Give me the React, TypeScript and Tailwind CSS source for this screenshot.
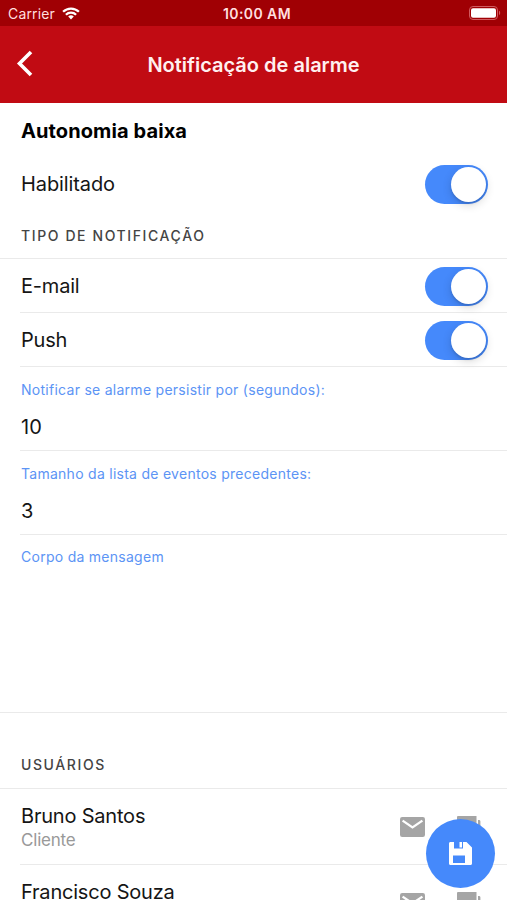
import { useState } from 'react';

interface User {
  name: string;
  role: string;
}

const users: User[] = [
  { name: 'Bruno Santos', role: 'Cliente' },
  { name: 'Francisco Souza', role: 'Cliente' },
];

function StatusBar() {
  return (
    <div className="relative flex h-[26px] shrink-0 items-center justify-between bg-[#a00004] pl-2 pr-[6px] text-[#ffdfdf]">
      <div className="flex items-center gap-[7px] pt-px">
        <span className="text-[14px] leading-none tracking-[0.15px]">Carrier</span>
        <svg width="18" height="13" viewBox="0 0 18 13" fill="none" stroke="#fff" strokeWidth="2.3">
          <path d="M1.1 4.8a11.3 11.3 0 0 1 15.8 0" />
          <path d="M3.9 7.7a7.3 7.3 0 0 1 10.2 0" />
          <path d="M9 12.4 6.2 9.5a4 4 0 0 1 5.6 0z" fill="#fff" stroke="none" />
        </svg>
      </div>
      <span className="absolute left-[257px] top-[7px] -translate-x-1/2 whitespace-nowrap text-[14px] font-semibold leading-[14px] tracking-[0.4px]">
        10:00 AM
      </span>
      <svg width="32" height="14" viewBox="0 0 32 14">
        <rect x="0.5" y="0.5" width="28" height="13" rx="3.5" fill="none" stroke="#d05a5f" />
        <rect x="2" y="2.2" width="25" height="9.6" rx="2" fill="#fff" />
        <path d="M30 4.8v4.4c1.6-.6 1.6-3.8 0-4.4z" fill="#d05a5f" />
      </svg>
    </div>
  );
}

function Toggle({ label }: { label: string }) {
  const [on, setOn] = useState(true);

  return (
    <button
      type="button"
      role="switch"
      aria-checked={on}
      aria-label={label}
      onClick={() => setOn(!on)}
      className={`flex h-[39px] w-[63px] items-center rounded-full px-[2px] ${on ? 'justify-end bg-[#4589fb]' : 'justify-start bg-gray-200'}`}
    >
      <span className="size-[35px] rounded-full bg-white shadow-[0_3px_10px_rgba(0,0,0,0.16),0_2px_2px_rgba(0,0,0,0.1)]" />
    </button>
  );
}

function ToggleRow({ label }: { label: string }) {
  return (
    <div className="ml-5 flex h-[54px] items-center justify-between border-b border-[#eaeaea] pl-px pr-[19px] pt-px">
      <span className="text-[20px] tracking-[-0.2px]">{label}</span>
      <Toggle label={label} />
    </div>
  );
}

function Field({ label, value }: { label: string; value: string }) {
  return (
    <div className="ml-5 h-[84px] border-b border-[#eaeaea] pl-px pt-[13px]">
      <label className="block text-[14px] leading-5 tracking-[0.27px] text-[#5c94f5]">{label}</label>
      <div className="pt-[14px] text-[20px] leading-[27px]">{value}</div>
    </div>
  );
}

function MailIcon() {
  return (
    <svg width="25" height="20" viewBox="0 0 25 20">
      <rect width="25" height="20" rx="2.2" fill="#a5a5a5" />
      <path d="M2.6 3.6 12.5 10.4 22.4 3.6" fill="none" stroke="#fff" strokeWidth="2.3" />
    </svg>
  );
}

function ChatIcon() {
  return (
    <svg width="25" height="24" viewBox="0 0 25 24" fill="#a5a5a5">
      <path d="M1.2 0H19.5v14H5L0 19V1.2C0 .5.5 0 1.2 0z" />
      <path d="M21 4h1c.8 0 1.400.6 1.400 1.400V24l-5-5H5v-3h16z" />
    </svg>
  );
}

function UserRow({ user }: { user: User }) {
  return (
    <div className="ml-5 flex h-[76px] shrink-0 items-center justify-between border-b border-[#eaeaea] pl-px pr-[25px]">
      <div className="pt-px">
        <div className="text-[20px] leading-[26px] tracking-[-0.2px]">{user.name}</div>
        <div className="text-[17px] leading-[22px] tracking-[-0.2px] text-[#999]">{user.role}</div>
      </div>
      <div className="flex items-start gap-8 pt-[3px]">
        <div className="pt-px">
          <MailIcon />
        </div>
        <ChatIcon />
      </div>
    </div>
  );
}

export default function App() {
  return (
    <div className="relative flex h-[900px] w-[507px] flex-col overflow-hidden bg-white font-['Inter','Liberation_Sans',sans-serif] text-[#151515]">
      <StatusBar />
      <header className="relative flex h-[77px] shrink-0 items-center justify-center bg-[#c10b13] text-white">
        <svg className="absolute left-4 top-6" width="18" height="27" viewBox="0 0 18 27">
          <path d="M15 2 3.500 13.500 15 25" fill="none" stroke="#fff" strokeWidth="3.600" />
        </svg>
        <h1 className="text-[20px] font-semibold text-[#fff0f0]">Notificação de alarme</h1>
      </header>

      <main className="flex shrink-0 flex-col">
        <h2 className="h-[54px] pl-[21px] text-[20px] font-bold leading-[56px] tracking-[0.1px] text-black">Autonomia baixa</h2>
        <div className="flex h-[54px] items-center justify-between pl-[21px] pr-[19px]">
          <span className="text-[20px] tracking-[-0.1px]">Habilitado</span>
          <Toggle label="Habilitado" />
        </div>
        <h3 className="h-12 border-b border-[#eaeaea] pl-[21px] text-[14px] font-medium leading-[49px] tracking-[1.6px] text-[#444]">
          TIPO DE NOTIFICAÇÃO
        </h3>
        <ToggleRow label="E-mail" />
        <ToggleRow label="Push" />
        <Field label="Notificar se alarme persistir por (segundos):" value="10" />
        <Field label="Tamanho da lista de eventos precedentes:" value="3" />
        <div className="h-[178px] border-b border-[#eaeaea] pl-[21px] pt-[12px] text-[14px] leading-5 tracking-[0.27px] text-[#5c94f5]">
          Corpo da mensagem
        </div>
        <h3 className="h-[76px] border-b border-[#eaeaea] pl-[21px] pt-[42px] text-[14px] font-medium leading-5 tracking-[1.6px] text-[#444]">
          USUÁRIOS
        </h3>
        {users.map((user) => (
          <UserRow key={user.name} user={user} />
        ))}
      </main>

      {/* Floating save button */}
      <button
        type="button"
        aria-label="Salvar"
        className="absolute left-[426px] top-[819px] flex size-[69px] items-center justify-center rounded-full bg-[#4589fb]"
      >
        <svg width="23" height="23" viewBox="0 0 23 23">
          <path
            d="M1.500 0H5v6.500h9V0h3.500L23 5.500v16c0 .9-.6 1.500-1.500 1.500h-20C.6 23 0 22.400 0 21.500v-20C0 .6.6 0 1.500 0zM4 13.500V21h12v-7.500zM10.500 0h2.500v5.500h-2.500z"
            fill="#fff"
            fillRule="evenodd"
          />
        </svg>
      </button>
    </div>
  );
}
